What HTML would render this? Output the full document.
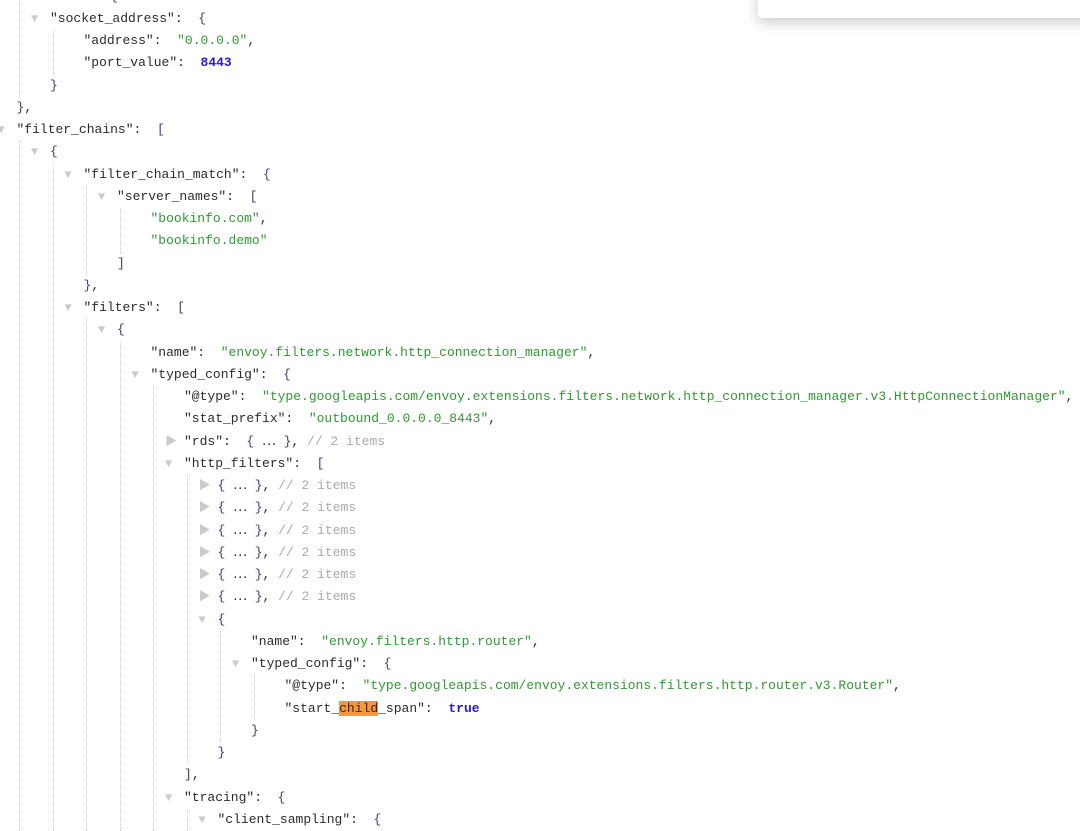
<!DOCTYPE html>
<html><head><meta charset="utf-8"><style>
body{margin:0;width:1080px;height:821px;background:#fff;overflow:hidden;position:relative;font-family:"Liberation Mono","Noto Sans CJK SC",monospace;font-size:13px;color:#2b2b2b}
.l{position:absolute;white-space:pre;line-height:22px;top:calc(var(--i)*22.25px - 14.5px);left:calc(var(--l)*33.5px + 16.5px)}
.t{position:absolute;left:-19px;top:0;font-size:12px;color:#cacaca}
.s{color:#2e9a2e}.b{color:#4a3a78}.n{color:#2a18d0;font-weight:bold}.c{color:#aaa}
.g{position:absolute;width:0;border-left:1px dotted #cfcfcf;left:calc(var(--k)*33.5px + 19px);top:calc(var(--a)*22.25px - 14.5px);height:calc((var(--b) - var(--a))*22.25px)}
.hl{background:#f7963a}
.pop{position:absolute;left:758px;top:-10px;width:340px;height:28px;background:#fff;border-radius:4px;box-shadow:0 4px 14px rgba(0,0,0,0.22)}
</style></head><body>
<div class="g" style="--k:0;--a:0;--b:5"></div>
<div class="g" style="--k:1;--a:2;--b:4"></div>
<div class="g" style="--k:0;--a:7;--b:38"></div>
<div class="g" style="--k:1;--a:8;--b:38"></div>
<div class="g" style="--k:2;--a:9;--b:13"></div>
<div class="g" style="--k:3;--a:10;--b:12"></div>
<div class="g" style="--k:2;--a:15;--b:38"></div>
<div class="g" style="--k:3;--a:16;--b:38"></div>
<div class="g" style="--k:4;--a:18;--b:38"></div>
<div class="g" style="--k:5;--a:22;--b:35"></div>
<div class="g" style="--k:6;--a:29;--b:34"></div>
<div class="g" style="--k:7;--a:31;--b:33"></div>
<div class="g" style="--k:5;--a:37;--b:38"></div>

<div class="l" style="--i:0;--l:0">"address":  <span class="b">{</span></div>
<div class="l" style="--i:1;--l:1"><span class="t">▼</span>"socket_address":  <span class="b">{</span></div>
<div class="l" style="--i:2;--l:2">"address":  <span class="s">"0.0.0.0"</span>,</div>
<div class="l" style="--i:3;--l:2">"port_value":  <span class="n">8443</span></div>
<div class="l" style="--i:4;--l:1"><span class="b">}</span></div>
<div class="l" style="--i:5;--l:0"><span class="b">}</span>,</div>
<div class="l" style="--i:6;--l:0"><span class="t">▼</span>"filter_chains":  <span class="b">[</span></div>
<div class="l" style="--i:7;--l:1"><span class="t">▼</span><span class="b">{</span></div>
<div class="l" style="--i:8;--l:2"><span class="t">▼</span>"filter_chain_match":  <span class="b">{</span></div>
<div class="l" style="--i:9;--l:3"><span class="t">▼</span>"server_names":  <span class="b">[</span></div>
<div class="l" style="--i:10;--l:4"><span class="s">"bookinfo.com"</span>,</div>
<div class="l" style="--i:11;--l:4"><span class="s">"bookinfo.demo"</span></div>
<div class="l" style="--i:12;--l:3"><span class="b">]</span></div>
<div class="l" style="--i:13;--l:2"><span class="b">}</span>,</div>
<div class="l" style="--i:14;--l:2"><span class="t">▼</span>"filters":  <span class="b">[</span></div>
<div class="l" style="--i:15;--l:3"><span class="t">▼</span><span class="b">{</span></div>
<div class="l" style="--i:16;--l:4">"name":  <span class="s">"envoy.filters.network.http_connection_manager"</span>,</div>
<div class="l" style="--i:17;--l:4"><span class="t">▼</span>"typed_config":  <span class="b">{</span></div>
<div class="l" style="--i:18;--l:5">"@type":  <span class="s">"type.googleapis.com/envoy.extensions.filters.network.http_connection_manager.v3.HttpConnectionManager"</span>,</div>
<div class="l" style="--i:19;--l:5">"stat_prefix":  <span class="s">"outbound_0.0.0.0_8443"</span>,</div>
<div class="l" style="--i:20;--l:5"><span class="t">▶</span>"rds":  <span class="b">{</span> ⋯ <span class="b">}</span>, <span class="c">// 2 items</span></div>
<div class="l" style="--i:21;--l:5"><span class="t">▼</span>"http_filters":  <span class="b">[</span></div>
<div class="l" style="--i:22;--l:6"><span class="t">▶</span><span class="b">{</span> ⋯ <span class="b">}</span>, <span class="c">// 2 items</span></div>
<div class="l" style="--i:23;--l:6"><span class="t">▶</span><span class="b">{</span> ⋯ <span class="b">}</span>, <span class="c">// 2 items</span></div>
<div class="l" style="--i:24;--l:6"><span class="t">▶</span><span class="b">{</span> ⋯ <span class="b">}</span>, <span class="c">// 2 items</span></div>
<div class="l" style="--i:25;--l:6"><span class="t">▶</span><span class="b">{</span> ⋯ <span class="b">}</span>, <span class="c">// 2 items</span></div>
<div class="l" style="--i:26;--l:6"><span class="t">▶</span><span class="b">{</span> ⋯ <span class="b">}</span>, <span class="c">// 2 items</span></div>
<div class="l" style="--i:27;--l:6"><span class="t">▶</span><span class="b">{</span> ⋯ <span class="b">}</span>, <span class="c">// 2 items</span></div>
<div class="l" style="--i:28;--l:6"><span class="t">▼</span><span class="b">{</span></div>
<div class="l" style="--i:29;--l:7">"name":  <span class="s">"envoy.filters.http.router"</span>,</div>
<div class="l" style="--i:30;--l:7"><span class="t">▼</span>"typed_config":  <span class="b">{</span></div>
<div class="l" style="--i:31;--l:8">"@type":  <span class="s">"type.googleapis.com/envoy.extensions.filters.http.router.v3.Router"</span>,</div>
<div class="l" style="--i:32;--l:8">"start_<span class="hl">child</span>_span":  <span class="n">true</span></div>
<div class="l" style="--i:33;--l:7"><span class="b">}</span></div>
<div class="l" style="--i:34;--l:6"><span class="b">}</span></div>
<div class="l" style="--i:35;--l:5"><span class="b">]</span>,</div>
<div class="l" style="--i:36;--l:5"><span class="t">▼</span>"tracing":  <span class="b">{</span></div>
<div class="l" style="--i:37;--l:6"><span class="t">▼</span>"client_sampling":  <span class="b">{</span></div>
<div class="pop"></div>
</body></html>
